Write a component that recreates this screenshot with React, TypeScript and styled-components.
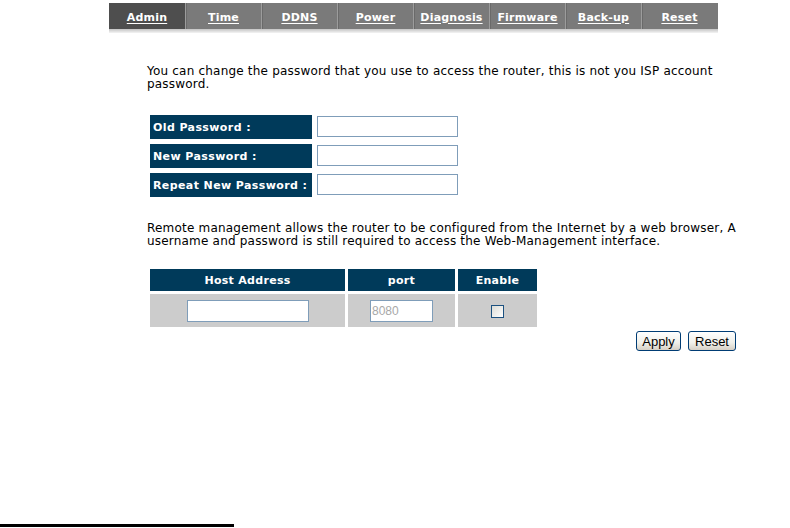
import React from "react";
import styled, { createGlobalStyle } from "styled-components";

const GlobalStyle = createGlobalStyle`
  html, body { margin: 0; padding: 0; background: #ffffff; }
  body { font-family: "DejaVu Sans", Verdana, sans-serif; }
  * { box-sizing: border-box; }
`;

const Page = styled.div`
  width: 790px;
  height: 528px;
  display: flex;
  flex-direction: column;
  overflow: hidden;
`;

const Main = styled.div`
  padding: 3px 0 0 109px;
`;

const TabBar = styled.nav`
  width: 609px;
  height: 26px;
  display: flex;
  background: #7a7a7a;
`;

const Tab = styled.a<{ $active?: boolean }>`
  width: 76px;
  height: 100%;
  display: flex;
  align-items: center;
  justify-content: center;
  padding-top: 2px;
  font-family: "DejaVu Sans", Verdana, sans-serif;
  font-weight: bold;
  font-size: 11px;
  letter-spacing: 0.2px;
  color: #ffffff;
  text-decoration: underline;
  text-underline-offset: 2px;
  background: ${(p) => (p.$active ? "#4e4e4e" : "transparent")};
  border-left: ${(p) => (p.$active ? "none" : "1px solid #9c9c9c")};
  box-shadow: ${(p) => (p.$active ? "none" : "inset 1px 0 0 #6a6a6a")};
  &:first-child { border-left: none; }
`;

const TabShadow = styled.div`
  width: 609px;
  height: 4px;
  background: linear-gradient(#c4c4c4, #f4f4f4);
`;

const Content = styled.div`
  padding-left: 38px;
`;

const Para = styled.p<{ $top: number }>`
  margin: ${(p) => p.$top}px 0 0 0;
  width: 594px;
  font-size: 12px;
  letter-spacing: 0.2px;
  line-height: 13px;
  color: #000000;
`;

const PwTable = styled.div`
  margin: 24px 0 0 3px;
  display: grid;
  grid-template-columns: 162px 141px;
  column-gap: 5px;
  row-gap: 5px;
`;

const Label = styled.div`
  height: 24px;
  background: #003a5a;
  color: #ffffff;
  font-weight: bold;
  font-size: 11px;
  letter-spacing: 0.4px;
  display: flex;
  align-items: center;
  padding-left: 3px;
`;

const TextInput = styled.input`
  width: 141px;
  height: 21px;
  margin-top: 1px;
  border: 1px solid #7f9db9;
  background: #ffffff;
  padding: 0 2px;
  font-size: 11px;
  font-family: "Liberation Sans", Arial, sans-serif;
  outline: none;
`;

const RemoteTable = styled.div`
  margin: 21px 0 0 3px;
  display: grid;
  grid-template-columns: 195px 107px 79px;
  grid-template-rows: 22px 33px;
  gap: 3px;
`;

const Head = styled.div`
  background: #003a5a;
  color: #ffffff;
  font-weight: bold;
  font-size: 11px;
  letter-spacing: 0.3px;
  display: flex;
  align-items: center;
  justify-content: center;
`;

const Cell = styled.div`
  background: #cccccc;
  display: flex;
  align-items: center;
  justify-content: center;
`;

const FieldInput = styled.input<{ $w: number }>`
  width: ${(p) => p.$w}px;
  height: 22px;
  margin-top: 1px;
  border: 1px solid #7f9db9;
  background: #ffffff;
  padding: 0 1px;
  font-size: 12px;
  font-family: "Liberation Sans", Arial, sans-serif;
  color: #a0a0a0;
  outline: none;
  &::placeholder { color: #a8a8a8; }
`;

const Check = styled.span`
  width: 13px;
  height: 13px;
  margin-top: 2px;
  border: 1px solid #1c5180;
  background: linear-gradient(135deg, #dcdcd6, #ffffff);
`;

const ButtonRow = styled.div`
  width: 589px;
  margin-top: 4px;
  display: flex;
  justify-content: flex-end;
  gap: 7px;
`;

const Button = styled.button<{ $w: number }>`
  width: ${(p) => p.$w}px;
  height: 20px;
  padding: 0;
  border: 1px solid #003c74;
  border-radius: 3px;
  background: linear-gradient(#ffffff, #f0f0ea 60%, #d6d0c5);
  font-family: "Liberation Sans", Arial, sans-serif;
  font-size: 13px;
  color: #000000;
`;

const FootRule = styled.div`
  margin-top: auto;
  margin-bottom: 1px;
  width: 234px;
  height: 3px;
  background: #000000;
`;

const tabs = ["Admin", "Time", "DDNS", "Power", "Diagnosis", "Firmware", "Back-up", "Reset"];

export default function App() {
  return (
    <Page>
      <GlobalStyle />
      <Main>
        <TabBar>
          {tabs.map((t, i) => (
            <Tab key={t} $active={i === 0}>
              {t}
            </Tab>
          ))}
        </TabBar>
        <TabShadow />
        <Content>
          <Para $top={32}>
            You can change the password that you use to access the router, this is not you ISP account password.
          </Para>
          <PwTable>
            <Label>Old Password :</Label>
            <TextInput type="password" />
            <Label>New Password :</Label>
            <TextInput type="password" />
            <Label>Repeat New Password :</Label>
            <TextInput type="password" />
          </PwTable>
          <Para $top={25}>
            Remote management allows the router to be configured from the Internet by a web browser, A username and
            password is still required to access the Web-Management interface.
          </Para>
          <RemoteTable>
            <Head>Host Address</Head>
            <Head>port</Head>
            <Head>Enable</Head>
            <Cell>
              <FieldInput $w={122} />
            </Cell>
            <Cell>
              <FieldInput $w={63} placeholder="8080" />
            </Cell>
            <Cell>
              <Check />
            </Cell>
          </RemoteTable>
          <ButtonRow>
            <Button $w={45}>Apply</Button>
            <Button $w={48}>Reset</Button>
          </ButtonRow>
        </Content>
      </Main>
      <FootRule />
    </Page>
  );
}
